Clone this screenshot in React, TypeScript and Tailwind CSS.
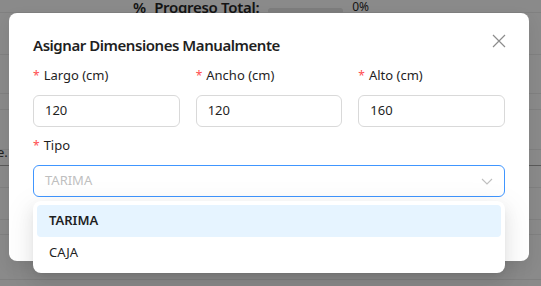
import React from "react";

const font = { fontFamily: '"Noto Sans", "Open Sans", sans-serif' };

function Field({ label, value }: { label: string; value: string }) {
  return (
    <div className="flex flex-col">
      <div className="flex items-center h-[22px] text-[13px] text-[#1f1f1f]">
        <span className="text-[#ff4d4f] mr-[4px] text-[12px]">*</span>
        {label}
      </div>
      <div className="mt-[8px] h-[32px] rounded-md border border-[#d9d9d9] flex items-center px-[11px] text-[13px] text-[#1f1f1f]">
        {value}
      </div>
    </div>
  );
}

export default function App() {
  const rows = [13, 42, 39, 16, 40, 16, 22, 32, 15, 45];
  return (
    <div className="relative w-[541px] h-[286px] overflow-hidden bg-[#8a8a8a]" style={font}>
      {/* background page under the mask */}
      <div className="flex flex-col">
        {rows.map((h, i) => (
          <div
            key={i}
            className={`border-b ${i === 5 ? "border-[#5a5a5a]" : "border-[#808080]"}`}
            style={{ height: h }}
          >
            {i === 5 && <span className="block -ml-[3px] -mt-[7px] text-[13px] text-[#222]">e.</span>}
          </div>
        ))}
      </div>
      <div className="absolute left-[133px] top-[-4px] flex items-center text-[15px] font-semibold text-[#141414]">
        <span className="mr-[8px]">%</span>
        <span className="tracking-[-0.3px]">Progreso Total:</span>
        <span className="ml-[9px] mt-[8px] w-[75px] h-[6px] rounded-full bg-[#7d7d7d]" />
        <span className="ml-[9px] font-normal text-[12px]">0%</span>
      </div>

      {/* modal */}
      <div className="absolute left-[9px] top-[13px] w-[520px] h-[248px] rounded-lg bg-white px-6 pt-[20px] shadow-[0_6px_16px_rgba(0,0,0,0.08)]">
        <div className="flex items-center justify-between h-[24px]">
          <span className="text-[15px] font-semibold tracking-[-0.45px] text-[#1f1f1f]">Asignar Dimensiones Manualmente</span>
          <svg width="16" height="16" viewBox="0 0 16 16" className="mr-[-2px] mt-[-8px]">
            <path d="M2 2L14 14M14 2L2 14" stroke="#8c8c8c" strokeWidth="1.2" />
          </svg>
        </div>
        <div className="mt-[8px] grid grid-cols-3 gap-4">
          <Field label="Largo (cm)" value="120" />
          <Field label="Ancho (cm)" value="120" />
          <Field label="Alto (cm)" value="160" />
        </div>
        <div className="mt-[8px] flex items-center h-[22px] text-[13px] text-[#1f1f1f]">
          <span className="text-[#ff4d4f] mr-[4px] text-[12px]">*</span>
          Tipo
        </div>
        <div className="mt-[8px] h-[32px] rounded-md border border-[#4096ff] flex items-center justify-between px-[11px] text-[13px] text-[#bfbfbf]">
          <span>TARIMA</span>
          <svg width="12" height="12" viewBox="0 0 12 12">
            <path d="M1 4L6 9L11 4" fill="none" stroke="#bfbfbf" strokeWidth="1.1" />
          </svg>
        </div>
      </div>

      {/* dropdown */}
      <div className="absolute left-[33px] top-[201px] w-[472px] rounded-lg bg-white p-[4px] shadow-[0_6px_16px_rgba(0,0,0,0.08),0_3px_6px_-4px_rgba(0,0,0,0.12),0_9px_28px_8px_rgba(0,0,0,0.05)]">
        <div className="h-[32px] rounded-[4px] bg-[#e6f4ff] flex items-center px-[12px] text-[13px] font-semibold text-[#1f1f1f]">
          TARIMA
        </div>
        <div className="h-[32px] flex items-center px-[12px] text-[13px] text-[#1f1f1f]">CAJA</div>
      </div>
    </div>
  );
}
